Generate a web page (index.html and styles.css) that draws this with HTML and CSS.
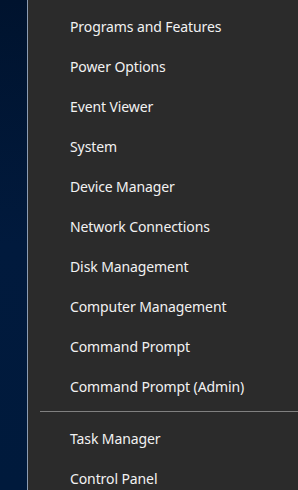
FILE: index.html
```html
<!DOCTYPE html>
<html>
<head>
<meta charset="utf-8">
<link rel="stylesheet" href="styles.css">
</head>
<body>
<div class="screen">
  <div class="desktop"></div>
  <div class="menu">
    <ul class="group">
      <li class="item">Programs and Features</li>
      <li class="item">Power Options</li>
      <li class="item">Event Viewer</li>
      <li class="item">System</li>
      <li class="item">Device Manager</li>
      <li class="item">Network Connections</li>
      <li class="item">Disk Management</li>
      <li class="item">Computer Management</li>
      <li class="item">Command Prompt</li>
      <li class="item">Command Prompt (Admin)</li>
    </ul>
    <div class="separator"></div>
    <ul class="group">
      <li class="item">Task Manager</li>
      <li class="item">Control Panel</li>
    </ul>
  </div>
</div>
</body>
</html>
```
FILE: styles.css
```css
html, body {
  margin: 0;
  padding: 0;
  height: 100%;
  overflow: hidden;
}
.screen {
  display: flex;
  height: 490px;
  width: 298px;
}
.desktop {
  width: 27px;
  flex: none;
  background: linear-gradient(180deg, #00132e 0%, #011a3d 50%, #001a3c 100%);
  border-right: 1px solid #8c9cb2;
}
.menu {
  flex: 1;
  background: #2b2b2b;
  padding-top: 6px;
  overflow: hidden;
}
.group {
  list-style: none;
  margin: 0;
  padding: 0;
}
.item {
  height: 40px;
  display: flex;
  align-items: center;
  padding-left: 42px;
  font-family: "Noto Sans", sans-serif;
  font-size: 14px;
  letter-spacing: -0.1px;
  color: #f2f2f2;
  white-space: nowrap;
}
.separator {
  height: 1px;
  margin: 5px 0 6px 12px;
  background: #808080;
}
```
